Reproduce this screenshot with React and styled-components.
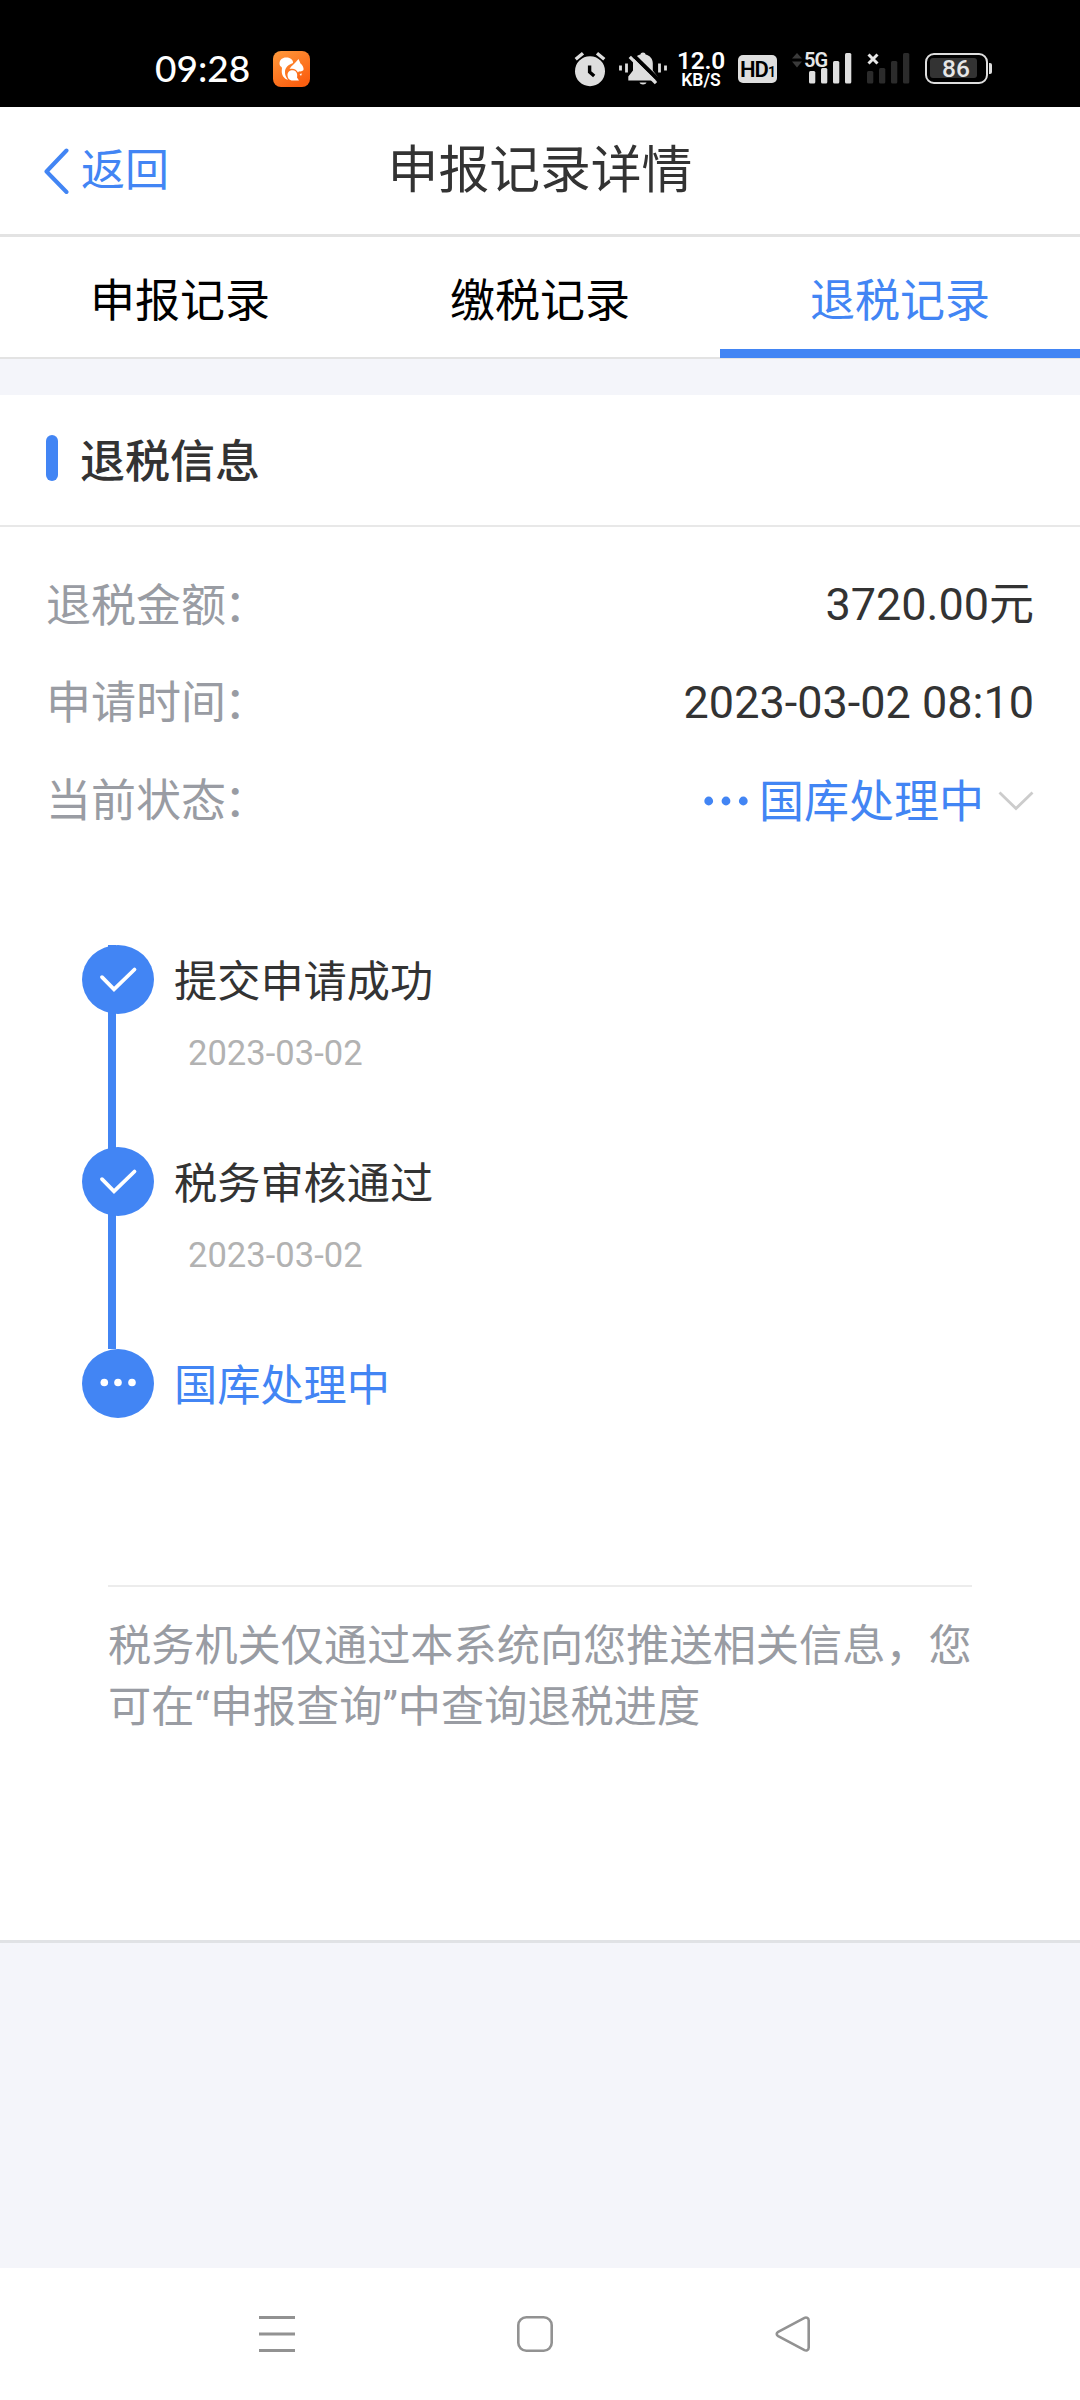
import React from "react";
import styled, { createGlobalStyle } from "styled-components";

const BLUE = "#4285f4";

const tabs = ["申报记录", "缴税记录", "退税记录"];

const steps = [
  { title: "提交申请成功", date: "2023-03-02", done: true },
  { title: "税务审核通过", date: "2023-03-02", done: true },
  { title: "国库处理中", done: false },
];

const UcIcon = () => (
  <svg width="37" height="36" viewBox="0 0 37 36">
    <defs>
      <linearGradient id="uc" x1="0" y1="0" x2="0.6" y2="1">
        <stop offset="0" stopColor="#ff9a3c" />
        <stop offset="1" stopColor="#fb5f10" />
      </linearGradient>
    </defs>
    <rect width="37" height="36" rx="8" fill="url(#uc)" />
    <path
      d="M6.500 12.500C6.500 8.500 10 6.200 13.500 6.500C17.500 6.500 20.500 9 20 12C15.500 13.500 12.200 16.500 12 20.500C11.800 23.500 12.800 26 15 29C10.500 27.500 8.300 23.500 8.800 19C9.100 17.300 9 16.500 8.200 15.800C7.200 15 6.500 14 6.500 12.500Z"
      fill="#fff"
    />
    <path
      d="M25.500 8L27.500 12.500C29.500 14 31 16.500 30.500 19C29.500 20.300 27.500 20.800 26 20.200L25 21.500C23.500 18.200 20.500 17 16.500 18C18.500 14.500 22 12.500 25.500 8Z"
      fill="#fff"
    />
    <path
      d="M14.500 24C14.500 20.800 17 19 20 19.300C23.500 19.800 24.800 23 24 26.500L26 29.500H18.500C16 29 14.500 27 14.500 24Z"
      fill="#fff"
    />
    <path d="M26.500 23L29 22.500L28 25Z" fill="#fff" />
  </svg>
);

const AlarmIcon = () => (
  <svg width="32" height="36" viewBox="0 0 32 36">
    <circle cx="16" cy="20.200" r="15" fill="#dedede" />
    <path d="M1.700 8.200L9 2.200M30.300 8.200L23 2.200" stroke="#000" strokeWidth="6" />
    <path d="M1.700 8.200L9 2.200M30.300 8.200L23 2.200" stroke="#dedede" strokeWidth="3.400" />
    <path d="M15.600 14.500V21L20.200 25" stroke="#000" strokeWidth="3.400" fill="none" />
  </svg>
);

const MuteIcon = () => (
  <svg width="48" height="36" viewBox="0 0 48 36">
    <path
      d="M24 1.500C25.500 1.500 26.400 2.300 26.600 3.600C31 4.600 33.800 8 33.800 12.500V19.500L38.500 25.500V29.500H9.300V25.500L14 19.500V12.500C14 8 17 4.600 21.400 3.600C21.600 2.300 22.500 1.500 24 1.500Z"
      fill="#dedede"
    />
    <path d="M20.500 31.500H27.500C27 34 21 34 20.500 31.500Z" fill="#dedede" />
    <path d="M14 4L40.500 30" stroke="#000" strokeWidth="4" />
    <path d="M10.800 5.800L37 32.200" stroke="#dedede" strokeWidth="3.300" />
    <path
      d="M1.500 14.500V19.500M7.500 12.500V21.500M40.500 12.500V21.500M46.500 14.500V19.500"
      stroke="#dedede"
      strokeWidth="2.800"
    />
  </svg>
);

const SignalBars = ({ color }) => (
  <svg width="43" height="31" viewBox="0 0 43 31" fill={color}>
    <rect x="0" y="18" width="6.300" height="12.500" rx="1.500" />
    <rect x="12" y="15" width="6.300" height="15.500" rx="1.500" />
    <rect x="24" y="8" width="6.300" height="22.500" rx="1.500" />
    <rect x="36" y="0" width="6.300" height="30.500" rx="1.500" />
  </svg>
);

const DataArrows = () => (
  <svg width="10" height="15" viewBox="0 0 10 15" fill="#3a3a3a">
    <path d="M5 0L10 5.500H0Z" />
    <path d="M5 14.500L10 8.500H0Z" />
  </svg>
);

const BackIcon = () => (
  <svg width="27" height="47" viewBox="0 0 27 47">
    <path
      d="M23.500 2.500L3.500 23.500L23.500 44"
      fill="none"
      stroke={BLUE}
      strokeWidth="4"
      strokeLinecap="round"
      strokeLinejoin="round"
    />
  </svg>
);

const DotsIcon = () => (
  <svg width="44" height="10" viewBox="0 0 44 10" fill={BLUE}>
    <circle cx="4.700" cy="5" r="4.400" />
    <circle cx="22" cy="5" r="4.400" />
    <circle cx="39.300" cy="5" r="4.400" />
  </svg>
);

const ArrowDown = () => (
  <svg width="36" height="20" viewBox="0 0 36 20">
    <path d="M1.500 1.500L18 17.500L34.500 1.500" fill="none" stroke="#ccc" strokeWidth="2.800" />
  </svg>
);

const StepIcon = ({ done }) => (
  <svg width="72" height="69" viewBox="0 0 72 69">
    <ellipse cx="36" cy="34.500" rx="36" ry="34.500" fill={BLUE} />
    {done ? (
      <path
        d="M20 32.200L32 44.300L52.500 24.500"
        fill="none"
        stroke="#fff"
        strokeWidth="3.800"
        strokeLinecap="round"
      />
    ) : (
      <g fill="#fff">
        <circle cx="22.300" cy="33.500" r="3.800" />
        <circle cx="36" cy="33.500" r="3.800" />
        <circle cx="50" cy="33.500" r="3.800" />
      </g>
    )}
  </svg>
);

const App = () => {
  return (
    <Page>
      <GlobalStyle />
      <StatusBar>
        <Clock>09:28</Clock>
        <UcIcon />
        <StatusIcons>
          <AlarmIcon />
          <MuteIcon />
          <Speed>
            <SpeedValue>12.0</SpeedValue>
            <SpeedUnit>KB/S</SpeedUnit>
          </Speed>
          <HdBadge>
            HD<small>1</small>
          </HdBadge>
          <Network>
            <DataArrows />
            <Signal $left={7}>
              <SignalTag>5G</SignalTag>
              <SignalBars color="#dedede" />
            </Signal>
            <Signal $left={15}>
              <NoSim width="12" height="12" viewBox="0 0 12 12">
                <path d="M1.500 1.500L10.500 10.500M10.500 1.500L1.500 10.500" stroke="#e6e6e6" strokeWidth="3" />
              </NoSim>
              <SignalBars color="#2b2b2b" />
            </Signal>
          </Network>
          <Battery>
            <BatteryLevel>86</BatteryLevel>
          </Battery>
          <BatteryCap />
        </StatusIcons>
      </StatusBar>

      <Header>
        <Back>
          <BackIcon />
          返回
        </Back>
        <HeaderTitle>申报记录详情</HeaderTitle>
      </Header>

      <Tabs>
        {tabs.map((tab, i) => (
          <Tab key={tab} $active={i === 2}>
            {tab}
          </Tab>
        ))}
      </Tabs>

      <Card>
        <CardHead>
          <Mark />
          <CardTitle>退税信息</CardTitle>
        </CardHead>

        <InfoList>
          <InfoRow>
            <Label>退税金额<Colon>：</Colon></Label>
            <Value>3720.00元</Value>
          </InfoRow>
          <InfoRow>
            <Label>申请时间<Colon>：</Colon></Label>
            <Value>2023-03-02 08:10</Value>
          </InfoRow>
          <InfoRow>
            <Label>当前状态<Colon>：</Colon></Label>
            <Status>
              <DotsIcon />
              <StatusText>国库处理中</StatusText>
              <ArrowDown />
            </Status>
          </InfoRow>
        </InfoList>

        <Timeline>
          {steps.map((step) => (
            <Step key={step.title} $done={step.done}>
              <StepIcon done={step.done} />
              <StepBody>
                <StepTitle $done={step.done}>{step.title}</StepTitle>
                {step.date && <StepDate>{step.date}</StepDate>}
              </StepBody>
            </Step>
          ))}
        </Timeline>

        <Tip>税务机关仅通过本系统向您推送相关信息，您可在“申报查询”中查询退税进度</Tip>
      </Card>

      <NavBar>
        <svg width="36" height="36" viewBox="0 0 36 36">
          <path d="M0 1.500H36M0 18H36M0 34.500H36" stroke="#929292" strokeWidth="3" />
        </svg>
        <svg width="36" height="36" viewBox="0 0 36 36">
          <rect x="1.300" y="1.300" width="33.400" height="33.400" rx="8" fill="none" stroke="#929292" strokeWidth="2.600" />
        </svg>
        <svg width="36" height="36" viewBox="0 0 36 36">
          <path
            d="M3.200 15.800L29.500 1.900C31.500 1 33.700 2 33.700 4.500V31.500C33.700 34 31.500 35 29.500 34.100L3.200 20.200C1.200 19 1.200 17 3.200 15.800Z"
            fill="none"
            stroke="#929292"
            strokeWidth="2.600"
          />
        </svg>
      </NavBar>
    </Page>
  );
};

const GlobalStyle = createGlobalStyle`
  body {
    margin: 0;
    background: #fff;
  }
  * {
    box-sizing: border-box;
  }
  svg {
    display: block;
    flex-shrink: 0;
  }
`;

const Page = styled.div`
  display: flex;
  flex-direction: column;
  width: 1080px;
  height: 2400px;
  overflow: hidden;
  background: #f4f5fa;
  color: #333;
  font-family: Roboto, "Noto Sans CJK SC", sans-serif;
`;

const StatusBar = styled.div`
  display: flex;
  align-items: center;
  height: 107px;
  padding: 30px 88px 0 155px;
  background: #000;
  color: #fff;
`;
const Clock = styled.div`
  width: 118px;
  padding-bottom: 2px;
  font-family: Lato, sans-serif;
  font-size: 37px;
  font-weight: 500;
  line-height: 40px;
`;
const StatusIcons = styled.div`
  display: flex;
  align-items: center;
  margin-left: auto;

  > svg:first-child {
    margin-right: 13px;
  }
`;
const Speed = styled.div`
  display: flex;
  flex-direction: column;
  align-items: center;
  width: 46px;
  margin: 0 14px 0 11px;
  padding-top: 2px;
  font-family: Roboto, sans-serif;
  font-weight: 600;
`;
const SpeedValue = styled.div`
  font-size: 24.500px;
  line-height: 21px;
  letter-spacing: -0.2px;
`;
const SpeedUnit = styled.div`
  font-size: 17.500px;
  line-height: 18px;
`;
const HdBadge = styled.div`
  display: flex;
  align-items: baseline;
  justify-content: center;
  width: 39px;
  height: 28px;
  border-radius: 5px;
  background: #dedede;
  color: #000;
  font-family: Roboto, sans-serif;
  font-size: 22px;
  font-weight: 600;
  line-height: 29px;
  letter-spacing: -1px;

  small {
    font-size: 14px;
  }
`;
const Network = styled.div`
  display: flex;
  align-items: flex-start;
  margin-left: 15px;
`;
const Signal = styled.div`
  position: relative;
  margin-left: ${({ $left }) => $left}px;
`;
const SignalTag = styled.div`
  position: absolute;
  top: -5px;
  left: -5px;
  font-family: Roboto, sans-serif;
  font-size: 20px;
  font-weight: 600;
  line-height: 24px;
  letter-spacing: -1px;
  color: #e6e6e6;
`;
const NoSim = styled.svg`
  position: absolute;
  top: 0;
  left: 0;
`;
const Battery = styled.div`
  width: 63px;
  height: 31px;
  margin-left: 15px;
  padding: 3px;
  border: 2.500px solid #dedede;
  border-radius: 9px;
`;
const BatteryLevel = styled.div`
  width: 47px;
  height: 20px;
  padding-left: 12px;
  border-radius: 3px;
  background: #333;
  color: #e6e6e6;
  font-family: Roboto, sans-serif;
  font-size: 24.500px;
  font-weight: 500;
  line-height: 22px;
`;
const BatteryCap = styled.div`
  width: 3px;
  height: 11px;
  margin-left: 1px;
  border-radius: 0 2px 2px 0;
  background: #dedede;
`;

const Header = styled.div`
  display: grid;
  grid-template-columns: 1fr auto 1fr;
  align-items: center;
  height: 130px;
  padding: 0 43px;
  border-bottom: 3px solid #e3e3e3;
  background: #fff;
`;
const Back = styled.div`
  display: flex;
  align-items: center;
  gap: 11px;
  padding-top: 1px;
  color: ${BLUE};
  font-size: 44px;
  line-height: 60px;
`;
const HeaderTitle = styled.div`
  font-size: 50.800px;
  line-height: 60px;
`;

const Tabs = styled.div`
  display: flex;
  height: 122px;
  border-bottom: 2px solid #e3e3e3;
  background: #fff;
`;
const Tab = styled.div`
  flex: 1;
  height: 121px;
  padding-top: 33px;
  border-bottom: ${({ $active }) => ($active ? `9px solid ${BLUE}` : "none")};
  color: ${({ $active }) => ($active ? BLUE : "#000")};
  font-size: 45px;
  line-height: 64px;
  text-align: center;
`;

const Card = styled.div`
  height: 1548px;
  margin-top: 36px;
  border-bottom: 3px solid #e0e2e5;
  background: #fff;
`;
const CardHead = styled.div`
  display: flex;
  align-items: center;
  height: 132px;
  padding: 0 46px;
  border-bottom: 2px solid #e8e8e8;
`;
const Mark = styled.div`
  width: 12px;
  height: 46px;
  margin: 0 22px 4px 0;
  border-radius: 6px;
  background: ${BLUE};
`;
const CardTitle = styled.div`
  padding-top: 6px;
  font-size: 45px;
  font-weight: 500;
  line-height: 64px;
`;

const InfoList = styled.div`
  padding: 29px 46px 0;
`;
const InfoRow = styled.div`
  display: flex;
  align-items: center;
  justify-content: space-between;
  height: 97.500px;
  font-size: 45px;
  line-height: 64px;
`;
const Label = styled.div`
  padding-top: 4px;
  color: #999ca3;
`;
const Colon = styled.span`
  margin-left: -2px;
`;
const Value = styled.div`
  padding-top: 1px;
  color: #333;
`;
const Status = styled.div`
  display: flex;
  align-items: center;
  padding-top: 3px;
`;
const StatusText = styled.div`
  margin: 0 14px 0 11px;
  padding-top: 4px;
  color: ${BLUE};
`;

const Timeline = styled.div`
  padding: 96px 82px 0;
`;
const Step = styled.div`
  display: flex;
  align-items: flex-start;
  height: 202px;
  background: ${({ $done }) =>
    $done ? `linear-gradient(${BLUE}, ${BLUE}) 26px 0 / 8px 100% no-repeat` : "none"};
`;
const StepBody = styled.div`
  padding: 7px 0 0 20px;
`;
const StepTitle = styled.div`
  color: ${({ $done }) => ($done ? "#333" : BLUE)};
  font-size: 43.200px;
  line-height: 62px;
`;
const StepDate = styled.div`
  margin-top: 17px;
  padding-left: 14px;
  color: #b2b2b2;
  font-size: 34.600px;
  line-height: 44px;
`;

const Tip = styled.div`
  margin: 34px 108px 0;
  padding-top: 29px;
  border-top: 2px solid #ececec;
  color: #999ca3;
  font-size: 43.200px;
  line-height: 61px;
`;

const NavBar = styled.div`
  display: flex;
  justify-content: space-between;
  height: 132px;
  margin-top: auto;
  padding: 48px 269px 0 259px;
  background: #fff;
`;

export default App;
